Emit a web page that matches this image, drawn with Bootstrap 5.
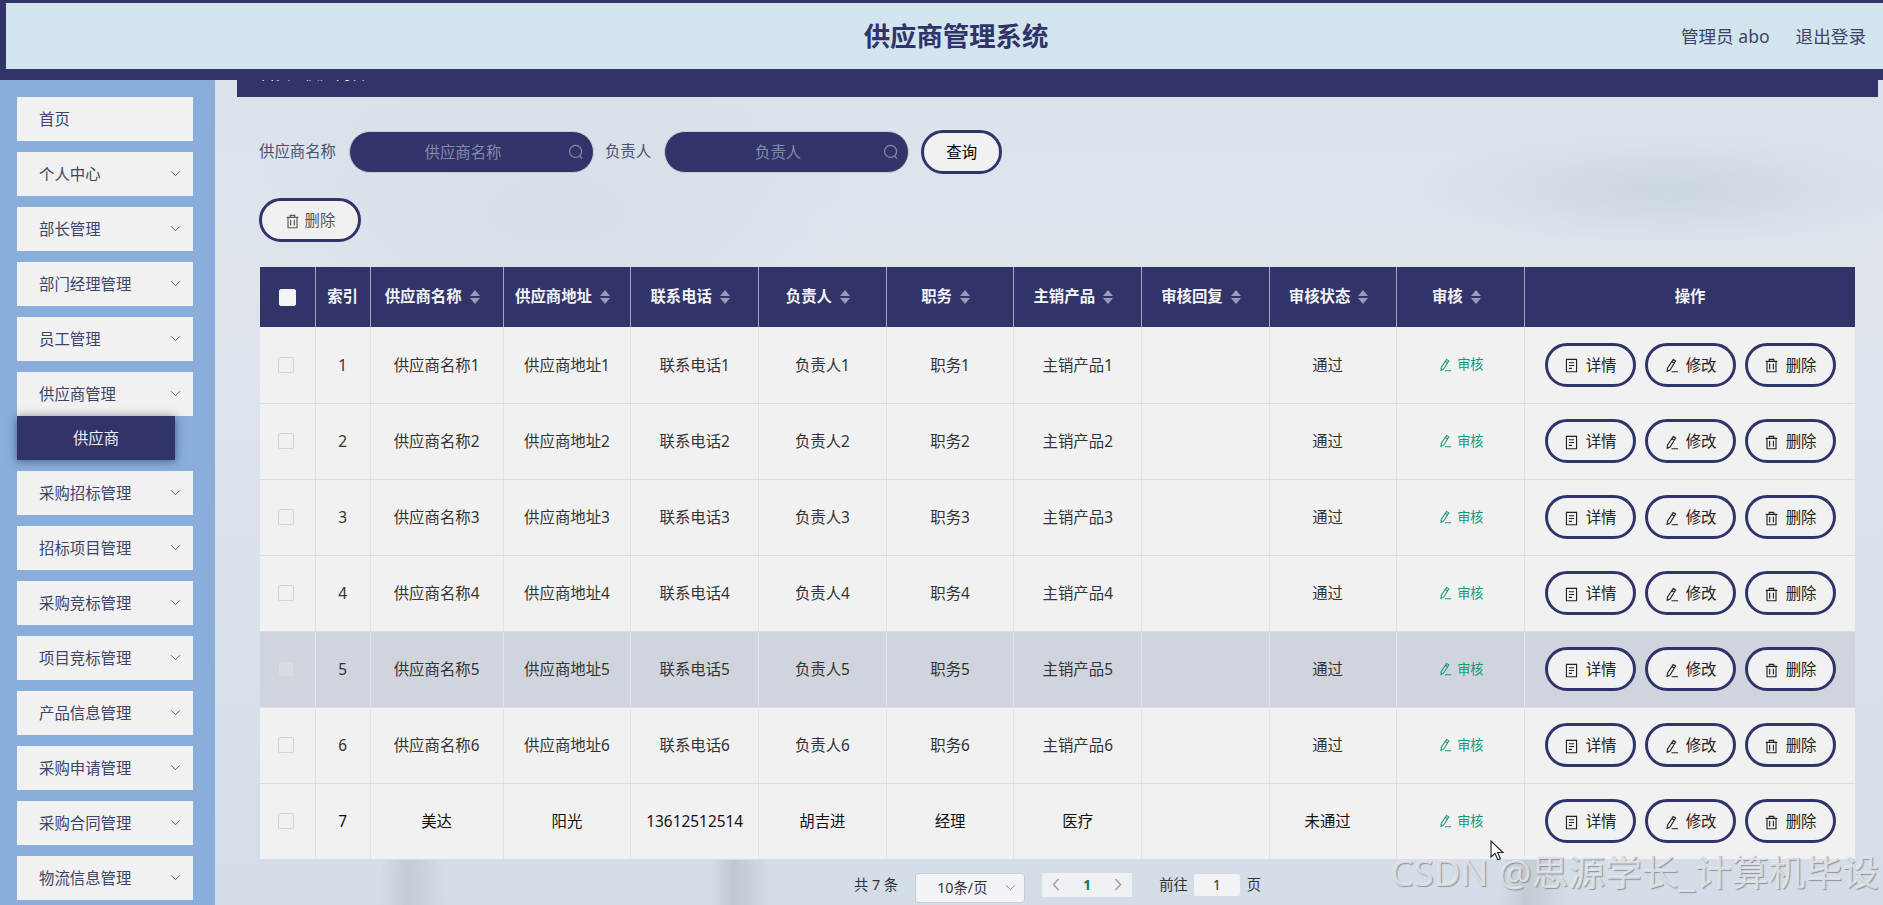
<!DOCTYPE html>
<html lang="zh">
  <head>
    <meta charset="utf-8">
    <title>供应商管理系统</title>
    <link href="https://cdn.jsdelivr.net/npm/bootstrap@5.3.3/dist/css/bootstrap.min.css" rel="stylesheet">
    <script src="https://cdn.jsdelivr.net/npm/bootstrap@5.3.3/dist/js/bootstrap.bundle.min.js"></script>
    <style>
      html, body { height: 905px; overflow: hidden; }
      body {
        font-family: "Noto Sans", "Noto Sans CJK SC", "Liberation Sans", sans-serif;
        font-size: 15.4px;
        color: #333;
        position: relative;
      }
      .top-head {
        display: grid;
        grid-template-columns: 1fr auto 1fr;
        align-items: center;
        height: 80px;
        padding: 0 17px 0 40px;
        background: #d2e5ef;
        border-style: solid;
        border-color: #313469;
        border-width: 3px 0 11px 6px;
        position: relative;
        z-index: 5;
      }
      .top-title { grid-column: 2; font-size: 26.4px; font-weight: 700; color: #313469; line-height: 1; }
      .top-user { grid-column: 3; justify-self: end; font-size: 17.6px; color: #3c4468; gap: 26px; }
      .page-wrap { height: 825px; }
      .side-menu {
        width: 215px;
        flex: none;
        background: #8aaedb;
        padding: 17px 22px 0 17px;
        gap: 11px;
      }
      .side-item {
        height: 44px;
        background: #f1f1f1;
        padding: 2px 12px 0 22px;
        color: #3c4468;
      }
      .side-item svg { margin-bottom: 4px; }
      .side-sub {
        width: 158px;
        height: 44px;
        padding-top: 1px;
        line-height: 44px;
        text-align: center;
        background: #313469;
        color: #eceef6;
        box-shadow: 0 1px 9px rgba(20, 24, 60, .55);
        position: relative;
      }
      .main-area {
        flex: 1;
        min-width: 0;
        padding: 0 28px 0 0;
        background:
          linear-gradient(90deg, transparent 165px, #c6cdd4 190px, #cad0d7 205px, transparent 230px) left bottom / 100% 46px no-repeat,
          linear-gradient(90deg, transparent 495px, #c1c8cf 518px, #c6cdd4 530px, transparent 555px) left bottom / 100% 46px no-repeat,
          linear-gradient(90deg, transparent 1285px, #c3cbd3 1310px, #c8d0d8 1325px, transparent 1350px) left bottom / 100% 46px no-repeat,
          radial-gradient(ellipse 260px 60px at 1455px 110px, #cbd7e3 0%, rgba(203, 215, 227, 0) 100%),
          radial-gradient(ellipse 320px 160px at 340px 130px, #d7dee8 0%, rgba(215, 222, 232, 0) 100%),
          linear-gradient(180deg, #dbe2ea 0%, #e0e5ec 25%, #d3dde8 100%);
      }
      .crumb-bar {
        display: flow-root;
        height: 17px;
        margin: 0 -23px 0 22px;
        background: #313469;
        color: #fff;
        padding-left: 23px;
      }
      .crumb-bar span { display: block; margin-top: -17px; line-height: 22px; }
      .search-row { margin: 34px 0 0 44px; height: 42px; }
      .search-label { color: #4a5070; margin-right: 13px; white-space: nowrap; }
      .search-box { width: 245px; height: 42px; position: relative; margin-right: 11px; }
      .search-box input {
        width: 100%;
        height: 100%;
        border: 1px solid #c3c9d8;
        border-radius: 21px;
        background: #313469;
        color: #fff;
        text-align: center;
        font-size: 15.4px;
        padding: 0 32px 0 15px;
      }
      .search-box input::placeholder { color: #8689a8; opacity: 1; }
      .search-box svg { position: absolute; right: 10px; top: 13px; color: #8689a8; }
      .round-btn {
        --bs-btn-padding-x: 0;
        --bs-btn-padding-y: 0;
        --bs-btn-font-size: 15.4px;
        --bs-btn-color: #222;
        --bs-btn-bg: #f1f1f1;
        --bs-btn-border-color: #313469;
        --bs-btn-border-width: 3px;
        --bs-btn-border-radius: 22px;
        --bs-btn-hover-bg: #f1f1f1;
        --bs-btn-hover-color: #222;
        --bs-btn-hover-border-color: #313469;
        display: inline-flex;
        align-items: center;
        justify-content: center;
        gap: 7px;
        width: 91px;
        height: 44px;
        padding-top: 2px;
      }
      .btn-query { width: 81px; margin-left: 1px; color: #000; }
      .btn-del-top { width: 102px; gap: 5px; --bs-btn-color: #555; color: #555; }
      .del-row { margin: 25px 0 25px 44px; }
      .table-wrap { margin-left: 45px; width: 1595px; }
      .sup-table { table-layout: fixed; width: 1595px; margin: 0; border-collapse: collapse; }
      .sup-table th {
        height: 60px;
        padding: 0;
        background: #313469;
        color: #f2f3f8;
        font-weight: 700;
        text-align: center;
        vertical-align: middle;
        border-left: 1px solid #a4a7c0;
        border-bottom: 0;
      }
      .sup-table th:first-child { border-left: 0; }
      .sup-table td {
        height: 76px;
        padding: 2px 0 0;
        background: #f1f1f1;
        color: #333;
        text-align: center;
        vertical-align: middle;
        border-left: 1px solid #e0e3ea;
        border-bottom: 1px solid #d9dee6;
        box-shadow: none;
      }
      .sup-table td:first-child { border-left: 0; }
      .sup-table tr.row-hover td { background: #d0d4dc; }
      .sup-table tr.row-new td { color: #111; }
      .sup-table td.state-cell { padding-right: 11px; }
      .sup-table td.flat-cell { padding: 0; }
      .col-check { width: 55px; }
      .col-index { width: 55px; }
      .col-name { width: 133px; }
      .col-mid { width: 127.6px; }
      .col-ops { width: 330px; }
      .head-sort { display: inline-flex; align-items: center; gap: 7px; margin: -3px 8px 0 0; }
      .sort-arrows { color: #9a9cb3; display: block; }
      .check-box { display: inline-block; width: 16px; height: 16px; margin: 0 2px 2px 0; border: 1px solid #cfd3da; border-radius: 2px; background: #f1f1f1; vertical-align: middle; }
      .check-all { width: 17px; height: 17px; margin-right: 0; background: #f4f4f6; border-color: #f4f4f6; }
      .row-hover .check-box { background: #d8dbe2; }
      .audit-link { color: #0f9a7a; font-size: 13.2px; display: inline-flex; align-items: center; gap: 5px; margin-top: 2px; }
      .ops-cell { gap: 9px; }
      .pager-row { margin: 13px 0 0 45px; width: 1595px; height: 30px; font-size: 14.3px; color: #333; }
      .pager-select {
        width: 110px;
        height: 30px;
        margin: 0 17px;
        background: #f1f3f6;
        border: 1px solid #c9ced6;
        border-radius: 3px;
        padding: 0 8px 0 21px;
        color: #333;
      }
      .pager-nums {
        width: 90px;
        height: 24px;
        margin-right: 27px;
        background: #eef0f3;
        padding: 0 10px;
        color: #9a9ea6;
      }
      .pager-cur { color: #0a7d5e; font-weight: 700; }
      .pager-input {
        width: 48px;
        height: 24px;
        margin: 0 6px 0 5px;
        background: #f1f3f6;
        border: 1px solid #d9dde3;
        border-radius: 3px;
        text-align: center;
        line-height: 22px;
      }
      .pager-text { line-height: 24px; }
      .water-mark {
        position: absolute;
        right: 4px;
        top: 850px;
        font-size: 36.8px;
        line-height: 44px;
        color: rgba(238, 240, 243, .75);
        text-shadow: 1px 1px 1px rgba(120, 125, 130, .75);
        white-space: nowrap;
        z-index: 8;
      }
      .mouse-arrow { position: absolute; left: 1490px; top: 840px; z-index: 9; }
    </style>
  </head>
  <body>
    <!-- shared icons -->
    <svg width="0" height="0" class="position-absolute">
      <symbol id="ico-trash" viewBox="0 0 16 16">
        <path d="M1.8 3.6h12.4M5.6 3.4V1.4h4.8v2M3.2 3.6v11h9.6v-11M6 6.2v6M10 6.2v6" fill="none" stroke="currentColor" stroke-width="1.2"/>
      </symbol>
      <symbol id="ico-doc" viewBox="0 0 16 16">
        <path d="M2.6 1.4h10.8v13.2H2.6zM5.2 5h5.6M5.2 8h5.6M5.2 11h3.2" fill="none" stroke="currentColor" stroke-width="1.2"/>
      </symbol>
      <symbol id="ico-edit" viewBox="0 0 16 16">
        <path d="M9.8 1.6l2.6 1.6-6 9.6-3 1.4.3-3.3zM8.4 3.8L11 5.5M8 14.6h7" fill="none" stroke="currentColor" stroke-width="1.2"/>
      </symbol>
      <symbol id="ico-search" viewBox="0 0 16 16">
        <circle cx="7.6" cy="7.4" r="6" fill="none" stroke="currentColor" stroke-width="1.3"/>
        <path d="M11.6 12l2.4 2.6" fill="none" stroke="currentColor" stroke-width="1.3"/>
      </symbol>
      <symbol id="ico-down" viewBox="0 0 12 8">
        <path d="M1 1.5l5 5 5-5" fill="none" stroke="currentColor" stroke-width="1"/>
      </symbol>
    </svg>

    <header class="top-head">
      <div class="top-title">供应商管理系统</div>
      <div class="top-user d-flex">
        <span>管理员 abo</span>
        <span>退出登录</span>
      </div>
    </header>

    <div class="page-wrap d-flex">
      <aside class="side-menu d-flex flex-column" id="sideMenu"></aside>

      <main class="main-area">
        <div class="crumb-bar"><span>首页 / 供应商管理</span></div>

        <form class="search-row d-flex align-items-center">
          <label class="search-label">供应商名称</label>
          <div class="search-box">
            <input type="text" placeholder="供应商名称">
            <svg width="16" height="16"><use href="#ico-search"/></svg>
          </div>
          <label class="search-label">负责人</label>
          <div class="search-box">
            <input type="text" placeholder="负责人">
            <svg width="16" height="16"><use href="#ico-search"/></svg>
          </div>
          <button type="button" class="btn round-btn btn-query">查询</button>
        </form>

        <div class="del-row">
          <button type="button" class="btn round-btn btn-del-top">
            <svg width="15" height="15"><use href="#ico-trash"/></svg>删除
          </button>
        </div>

        <div class="table-wrap">
          <table class="table sup-table">
            <thead><tr id="tableHead"></tr></thead>
            <tbody id="tableBody"></tbody>
          </table>
        </div>

        <div class="pager-row d-flex justify-content-center">
          <span class="pager-text">共 7 条</span>
          <div class="pager-select d-flex align-items-center justify-content-between">
            <span>10条/页</span>
            <svg width="11" height="7" class="text-secondary"><use href="#ico-down"/></svg>
          </div>
          <div class="pager-nums d-flex align-items-center justify-content-between">
            <svg width="8" height="13" viewBox="0 0 8 13"><path d="M6.5 1L1.5 6.5l5 5.5" fill="none" stroke="currentColor" stroke-width="1.4"/></svg>
            <span class="pager-cur">1</span>
            <svg width="8" height="13" viewBox="0 0 8 13"><path d="M1.5 1l5 5.5-5 5.5" fill="none" stroke="currentColor" stroke-width="1.4"/></svg>
          </div>
          <span class="pager-text">前往</span>
          <div class="pager-input">1</div>
          <span class="pager-text">页</span>
        </div>
      </main>
    </div>

    <div class="water-mark">CSDN @思源学长_计算机毕设</div>

    <svg class="mouse-arrow" width="15" height="22" viewBox="0 0 15 22">
      <path d="M1 1v16l4-3.6 2.8 6.4 2.6-1.1-2.8-6.2H13z" fill="#fff" stroke="#222" stroke-width="1.1"/>
    </svg>

    <script>
      // Sidebar menu
      const menuNames = ['首页', '个人中心', '部长管理', '部门经理管理', '员工管理', '供应商管理', '采购招标管理',
        '招标项目管理', '采购竞标管理', '项目竞标管理', '产品信息管理', '采购申请管理', '采购合同管理', '物流信息管理'];

      document.getElementById('sideMenu').innerHTML = menuNames.map((name, i) => {
        const arrow = i === 0 ? '' : '<svg width="11" height="7"><use href="#ico-down"/></svg>';
        const sub = name === '供应商管理' ? '<div class="side-sub">供应商</div>' : '';
        return `<div>
          <div class="side-item d-flex align-items-center justify-content-between"><span>${name}</span>${arrow}</div>
          ${sub}
        </div>`;
      }).join('');

      // Table head
      const sortIcon = `<svg class="sort-arrows" width="12" height="16" viewBox="0 0 12 16"><path d="M6 1l5 6H1zM6 15L1 9h10z" fill="currentColor"/></svg>`;
      const sortCols = [['供应商名称', 'col-name'], ['供应商地址', 'col-mid'], ['联系电话', 'col-mid'], ['负责人', 'col-mid'],
        ['职务', 'col-mid'], ['主销产品', 'col-mid'], ['审核回复', 'col-mid'], ['审核状态', 'col-mid'], ['审核', 'col-mid']];

      document.getElementById('tableHead').innerHTML =
        '<th class="col-check"><span class="check-box check-all"></span></th>' +
        '<th class="col-index">索引</th>' +
        sortCols.map(c => `<th class="${c[1]}"><span class="head-sort">${c[0]}${sortIcon}</span></th>`).join('') +
        '<th class="col-ops">操作</th>';

      // Table rows
      const rows = [];
      for (let i = 1; i <= 6; i++) {
        rows.push({ name: '供应商名称' + i, addr: '供应商地址' + i, tel: '联系电话' + i, person: '负责人' + i, job: '职务' + i, product: '主销产品' + i, state: '通过' });
      }
      rows.push({ name: '美达', addr: '阳光', tel: '13612512514', person: '胡吉进', job: '经理', product: '医疗', state: '未通过' });

      document.getElementById('tableBody').innerHTML = rows.map((r, i) => {
        const cls = i === 4 ? 'row-hover' : (i === 6 ? 'row-new' : '');
        return `<tr class="${cls}">
          <td class="flat-cell"><span class="check-box"></span></td>
          <td>${i + 1}</td>
          <td>${r.name}</td>
          <td>${r.addr}</td>
          <td>${r.tel}</td>
          <td>${r.person}</td>
          <td>${r.job}</td>
          <td>${r.product}</td>
          <td></td>
          <td class="state-cell">${r.state}</td>
          <td><span class="audit-link"><svg width="14" height="14"><use href="#ico-edit"/></svg>审核</span></td>
          <td class="flat-cell">
            <div class="ops-cell d-flex justify-content-center">
              <button type="button" class="btn round-btn"><svg width="15" height="15"><use href="#ico-doc"/></svg>详情</button>
              <button type="button" class="btn round-btn"><svg width="15" height="15"><use href="#ico-edit"/></svg>修改</button>
              <button type="button" class="btn round-btn"><svg width="15" height="15"><use href="#ico-trash"/></svg>删除</button>
            </div>
          </td>
        </tr>`;
      }).join('');
    </script>
  </body>
</html>
